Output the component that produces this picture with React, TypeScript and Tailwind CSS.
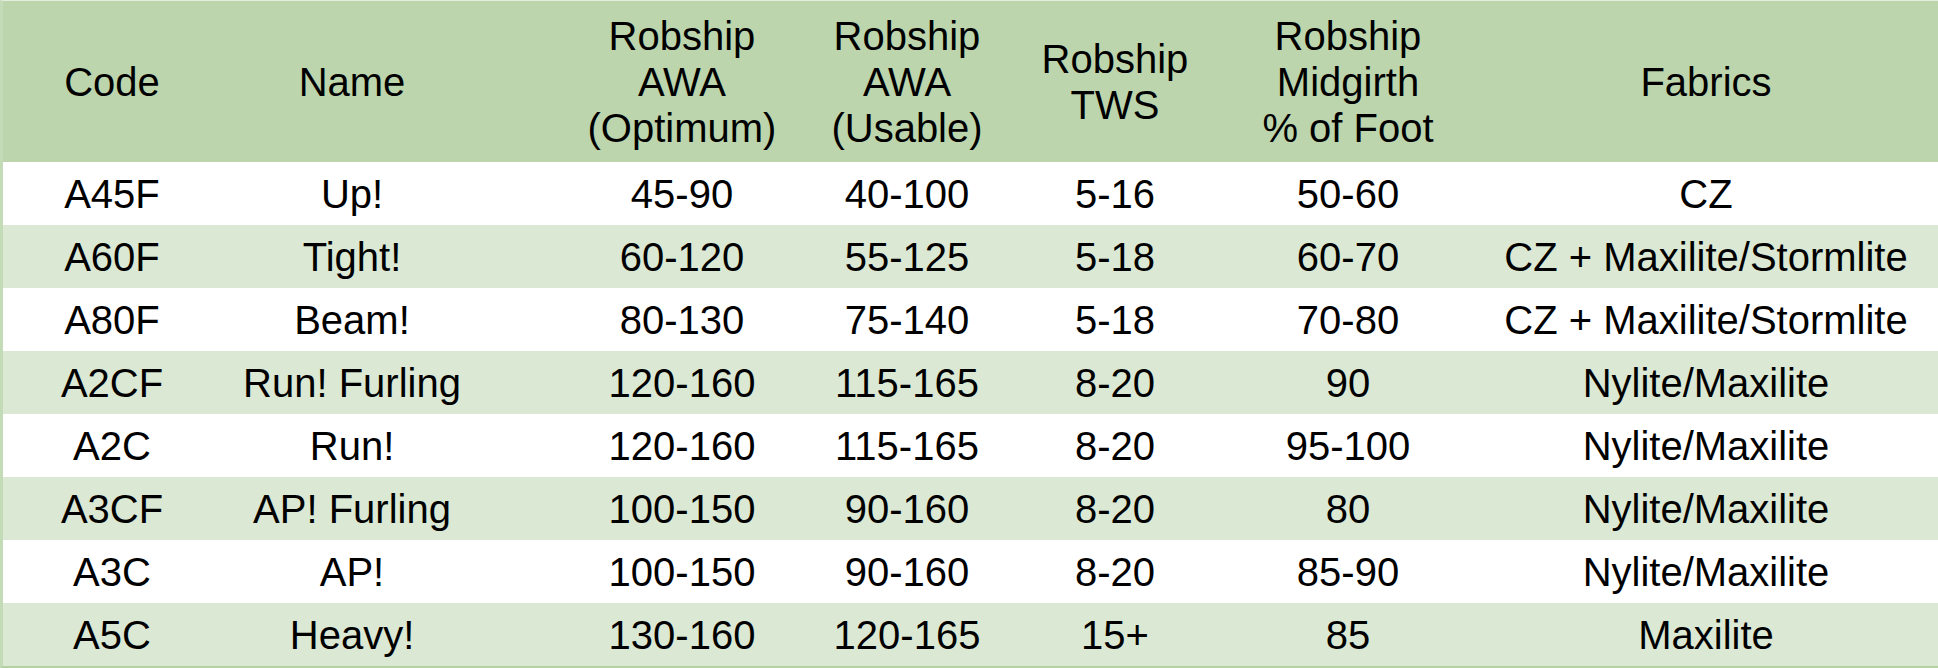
const rows = [
  ["A45F", "Up!", "45-90", "40-100", "5-16", "50-60", "CZ"],
  ["A60F", "Tight!", "60-120", "55-125", "5-18", "60-70", "CZ + Maxilite/Stormlite"],
  ["A80F", "Beam!", "80-130", "75-140", "5-18", "70-80", "CZ + Maxilite/Stormlite"],
  ["A2CF", "Run! Furling", "120-160", "115-165", "8-20", "90", "Nylite/Maxilite"],
  ["A2C", "Run!", "120-160", "115-165", "8-20", "95-100", "Nylite/Maxilite"],
  ["A3CF", "AP! Furling", "100-150", "90-160", "8-20", "80", "Nylite/Maxilite"],
  ["A3C", "AP!", "100-150", "90-160", "8-20", "85-90", "Nylite/Maxilite"],
  ["A5C", "Heavy!", "130-160", "120-165", "15+", "85", "Maxilite"],
];

// per-column padding nudges the centred text to where the sheet had it
const cellPad = ["pr-[11px]", "pr-[51px]", "pl-[46px]", "pl-[8px]", "pr-[12px]", "pr-[28px]", "pr-[22px]"];

const grid =
  "grid grid-cols-[229px_291px_272px_216px_220px_262px_448px] w-[1938px]";

function App() {
  return (
    <div className="w-[1938px] h-[668px] bg-white text-black font-['Liberation_Sans',Arial,sans-serif] text-[40px] overflow-hidden">
      <div className="border-t border-t-[#e4eedf] border-l-[3px] border-l-[#c3dbb6] border-b-[2px] border-b-[#b3d1a3]">
        {/* Header */}
        <div className={`${grid} h-[161px] bg-[#bcd5ad] leading-[46px]`}>
          <div className={`flex items-center justify-center text-center ${cellPad[0]}`}>Code</div>
          <div className={`flex items-center justify-center text-center ${cellPad[1]}`}>Name</div>
          <div className={`flex items-center justify-center text-center ${cellPad[2]}`}>
            <div>
              Robship
              <br />
              AWA
              <br />
              (Optimum)
            </div>
          </div>
          <div className={`flex items-center justify-center text-center ${cellPad[3]}`}>
            <div>
              Robship
              <br />
              AWA
              <br />
              (Usable)
            </div>
          </div>
          <div className={`flex items-center justify-center text-center ${cellPad[4]}`}>
            <div>
              Robship
              <br />
              TWS
            </div>
          </div>
          <div className={`flex items-center justify-center text-center ${cellPad[5]}`}>
            <div>
              Robship
              <br />
              Midgirth
              <br />% of Foot
            </div>
          </div>
          <div className={`flex items-center justify-center text-center ${cellPad[6]}`}>Fabrics</div>
        </div>

        {/* Body */}
        {rows.map((row, i) => (
          <div
            key={row[0]}
            className={`${grid} h-[63px] ${i % 2 === 0 ? "bg-white" : "bg-[#dbe8d4]"}`}
          >
            {row.map((cell, j) => (
              <div
                key={j}
                className={`flex items-center justify-center whitespace-nowrap ${cellPad[j]}`}
              >
                {cell}
              </div>
            ))}
          </div>
        ))}
      </div>
    </div>
  );
}

export default App;
